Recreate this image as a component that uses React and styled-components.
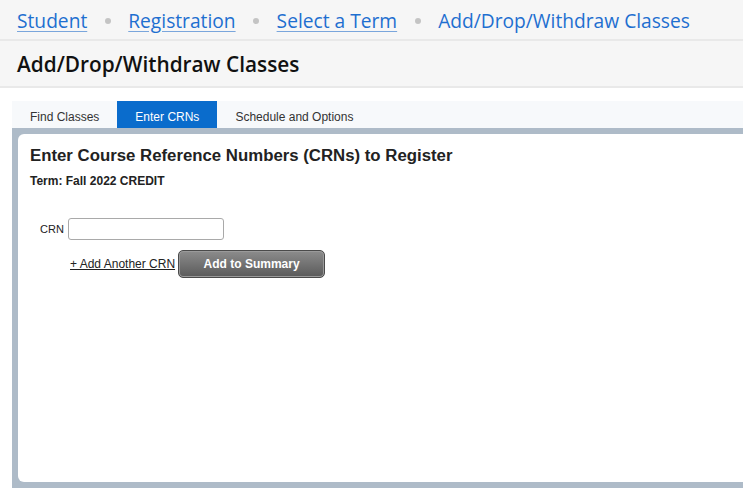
import React from "react";
import styled, { createGlobalStyle } from "styled-components";

const GlobalStyle = createGlobalStyle`
  html, body {
    margin: 0;
    padding: 0;
    background: #ffffff;
  }
  body {
    font-family: "Liberation Sans", Arial, sans-serif;
  }
`;

const Page = styled.div`
  width: 743px;
  height: 495px;
  overflow: hidden;
  background: #ffffff;
`;

const Breadcrumbs = styled.nav`
  display: flex;
  align-items: center;
  height: 38px;
  padding: 1px 0 0 17px;
  background: #f6f6f6;
  border-bottom: 2px solid #e9e9e9;
  font-family: "Open Sans", sans-serif;
  font-size: 19.2px;
  white-space: nowrap;
`;

const Crumb = styled.a`
  color: #1e6fd0;
  text-decoration: ${(p) => (p.$current ? "none" : "underline")};
  text-decoration-color: #7aa6dc;
  text-underline-offset: 3px;
`;

const Dot = styled.span`
  width: 6px;
  height: 6px;
  margin: 2px 17.5px 0 17.5px;
  border-radius: 50%;
  background: #c4c4c4;
`;

const TitleBar = styled.div`
  display: flex;
  align-items: center;
  height: 45px;
  padding-left: 17px;
  background: #f6f6f6;
  border-bottom: 2px solid #e9e9e9;
`;

const PageTitle = styled.h1`
  margin: 0;
  font-family: "Open Sans", sans-serif;
  font-size: 20.8px;
  font-weight: 600;
  color: #111;
`;

const Content = styled.div`
  padding: 13px 0 0 12px;
`;

const TabStrip = styled.div`
  display: flex;
  height: 27px;
  background: #f7f9fb;
`;

const Tab = styled.div`
  display: flex;
  align-items: center;
  padding: 4px 18px 0;
  font-size: 12px;
  color: ${(p) => (p.$active ? "#ffffff" : "#333")};
  background: ${(p) => (p.$active ? "#0a6ccc" : "transparent")};
`;

const Frame = styled.div`
  background: #aebbc8;
  padding: 6px 0 6px 6px;
`;

const Panel = styled.section`
  height: 336px;
  padding: 12px 0 0 12px;
  background: #ffffff;
  border-radius: 6px 0 0 6px;
`;

const Heading = styled.h2`
  margin: 0;
  font-size: 16.8px;
  font-weight: bold;
  color: #222;
`;

const Term = styled.p`
  margin: 8px 0 0;
  font-size: 12px;
  font-weight: bold;
  color: #222;
`;

const CrnRow = styled.div`
  display: flex;
  align-items: center;
  gap: 4px;
  margin: 30px 0 0 10px;
`;

const Label = styled.label`
  font-size: 11px;
  color: #222;
`;

const CrnInput = styled.input`
  box-sizing: border-box;
  width: 156px;
  height: 22px;
  border: 1px solid #a9a9a9;
  border-radius: 3px;
  outline: none;
`;

const ActionRow = styled.div`
  display: flex;
  align-items: center;
  gap: 3px;
  margin: 10px 0 0 40px;
`;

const AddLink = styled.a`
  font-size: 12px;
  color: #222;
  text-decoration: underline;
`;

const SummaryButton = styled.button`
  box-sizing: border-box;
  width: 147px;
  height: 28px;
  border: 1px solid #4a4a4a;
  border-radius: 5px;
  box-shadow: inset 0 0 0 1px #9a9a9a;
  background: linear-gradient(#8c8c8c, #5a5a5a);
  color: #ffffff;
  font-family: "Liberation Sans", Arial, sans-serif;
  font-size: 12px;
  font-weight: bold;
`;

const crumbs = ["Student", "Registration", "Select a Term"];

export default function App() {
  return (
    <Page>
      <GlobalStyle />
      <Breadcrumbs>
        {crumbs.map((c) => (
          <React.Fragment key={c}>
            <Crumb href="#">{c}</Crumb>
            <Dot />
          </React.Fragment>
        ))}
        <Crumb $current>Add/Drop/Withdraw Classes</Crumb>
      </Breadcrumbs>
      <TitleBar>
        <PageTitle>Add/Drop/Withdraw Classes</PageTitle>
      </TitleBar>
      <Content>
        <TabStrip>
          <Tab>Find Classes</Tab>
          <Tab $active>Enter CRNs</Tab>
          <Tab>Schedule and Options</Tab>
        </TabStrip>
        <Frame>
          <Panel>
            <Heading>Enter Course Reference Numbers (CRNs) to Register</Heading>
            <Term>Term: Fall 2022 CREDIT</Term>
            <CrnRow>
              <Label htmlFor="crn">CRN</Label>
              <CrnInput id="crn" type="text" />
            </CrnRow>
            <ActionRow>
              <AddLink href="#">+ Add Another CRN</AddLink>
              <SummaryButton>Add to Summary</SummaryButton>
            </ActionRow>
          </Panel>
        </Frame>
      </Content>
    </Page>
  );
}
